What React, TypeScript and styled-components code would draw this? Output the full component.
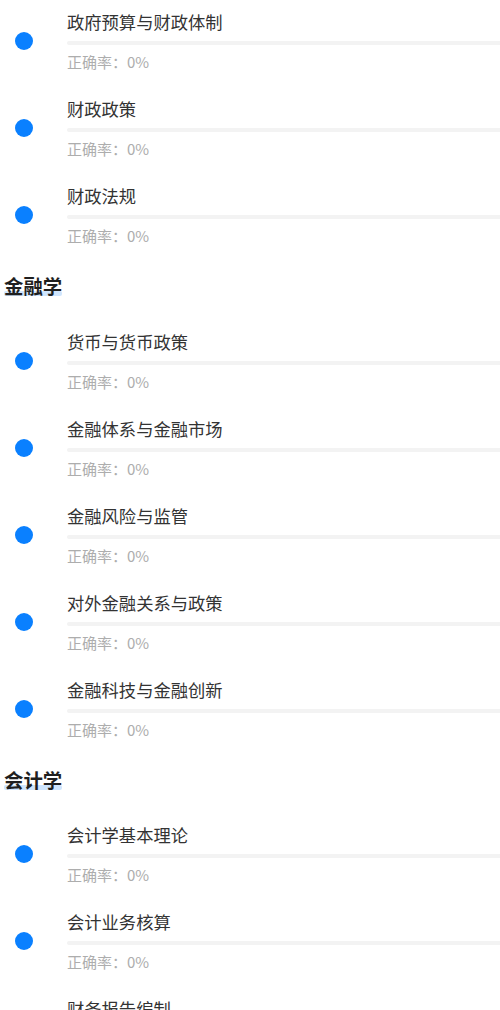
import React from "react";
import styled, { createGlobalStyle } from "styled-components";

const GlobalStyle = createGlobalStyle`
  html, body { margin: 0; padding: 0; background: #ffffff; }
  body {
    font-family: "Noto Sans CJK SC", "Noto Sans", sans-serif;
    overflow: hidden;
  }
`;

const Page = styled.div`
  width: 500px;
  height: 1010px;
  overflow: hidden;
`;

const Section = styled.section`
  display: flex;
  flex-direction: column;
`;

const Header = styled.div`
  height: 58.5px;
  padding: 13px 0 0 4px;
  box-sizing: border-box;
`;

const HeaderText = styled.span`
  position: relative;
  display: inline-block;
  font-size: 19.4px;
  line-height: 24px;
  font-weight: 700;
  color: #1f1f1f;
  z-index: 0;
  &::after {
    content: "";
    position: absolute;
    left: 0;
    right: 0;
    bottom: 2px;
    height: 5px;
    border-radius: 2px;
    background: #cfe5fd;
    z-index: -1;
  }
`;

const Item = styled.div`
  display: flex;
  align-items: center;
  height: 87px;
  box-sizing: border-box;
  padding: 10px 0 15px 15px;
`;

const Dot = styled.span`
  flex: none;
  width: 18px;
  height: 18px;
  border-radius: 50%;
  background: #0a80ff;
  margin-right: 34px;
`;

const Content = styled.div`
  flex: 1;
  display: flex;
  flex-direction: column;
  min-width: 0;
`;

const Title = styled.div`
  font-size: 17.3px;
  line-height: 24px;
  color: #333333;
  white-space: nowrap;
`;

const Bar = styled.div`
  height: 4px;
  margin-top: 7px;
  background: #f3f3f3;
  border-radius: 2px 0 0 2px;
`;

const Rate = styled.div`
  margin-top: 7px;
  font-size: 15px;
  line-height: 20px;
  color: #adadad;
`;

type SectionData = { name?: string; items: string[] };

const sections: SectionData[] = [
  { items: ["政府预算与财政体制", "财政政策", "财政法规"] },
  {
    name: "金融学",
    items: [
      "货币与货币政策",
      "金融体系与金融市场",
      "金融风险与监管",
      "对外金融关系与政策",
      "金融科技与金融创新",
    ],
  },
  {
    name: "会计学",
    items: ["会计学基本理论", "会计业务核算", "财务报告编制"],
  },
];

export default function App() {
  return (
    <Page>
      <GlobalStyle />
      {sections.map((s, i) => (
        <Section key={i}>
          {s.name && (
            <Header>
              <HeaderText>{s.name}</HeaderText>
            </Header>
          )}
          {s.items.map((t) => (
            <Item key={t}>
              <Dot />
              <Content>
                <Title>{t}</Title>
                <Bar />
                <Rate>正确率：0%</Rate>
              </Content>
            </Item>
          ))}
        </Section>
      ))}
    </Page>
  );
}
